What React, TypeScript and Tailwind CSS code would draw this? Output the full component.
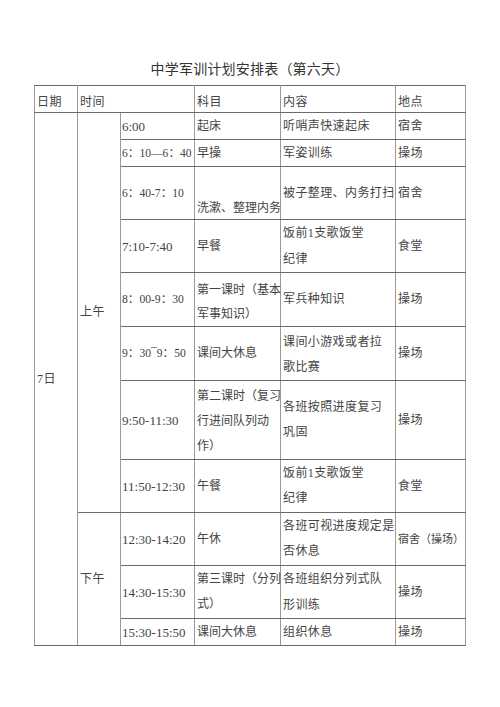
import type { ReactNode } from "react";

type CellProps = {
  children?: ReactNode;
  rowSpan?: number;
  colSpan?: number;
  className?: string;
};

function Td({ children, rowSpan, colSpan, className = "" }: CellProps) {
  return (
    <td
      rowSpan={rowSpan}
      colSpan={colSpan}
      className={`border-y border-y-[#6b6b6b] border-x border-x-[#9a9a9a] p-0 pl-[2px] align-middle ${className}`}
    >
      {children}
    </td>
  );
}

function Time({ children, ascii }: { children: ReactNode; ascii?: boolean }) {
  return (
    <Td className={`whitespace-nowrap tracking-[0px] ${ascii ? "text-[13px]" : "text-[11.6px]"} !pl-[1px]`}>
      {children}
    </Td>
  );
}

// 科目 column: a touch tighter so 7 characters fit the 86px column
function Subj({ children, className = "" }: { children: ReactNode; className?: string }) {
  return <Td className={`whitespace-nowrap tracking-[0px] ${className}`}>{children}</Td>;
}

export default function App() {
  return (
    <div className="min-h-[707px] w-[500px] bg-white pt-[60px] font-['Liberation_Serif','Noto_Sans_CJK_SC',serif] text-[#444]">
      <h1 className="h-[20px] text-center text-[14px] leading-[20px] tracking-[0.2px] text-[#333]">
        中学军训计划安排表（第六天）
      </h1>

      <table className="mx-auto mt-[5px] w-[431px] table-fixed border-collapse text-[12px] leading-[25px] tracking-[0.4px]">
        <colgroup>
          <col className="w-[43px]" />
          <col className="w-[43px]" />
          <col className="w-[74px]" />
          <col className="w-[86px]" />
          <col className="w-[115px]" />
          <col className="w-[70px]" />
        </colgroup>
        <tbody>
          <tr className="h-[27px]">
            <Td className="!align-bottom leading-[20px]">日期</Td>
            <Td colSpan={2} className="!align-bottom leading-[20px]">时间</Td>
            <Td className="!align-bottom leading-[20px]">科目</Td>
            <Td className="!align-bottom leading-[20px]">内容</Td>
            <Td className="!align-bottom leading-[20px]">地点</Td>
          </tr>

          <tr className="h-[27px]">
            <Td rowSpan={11}>7日</Td>
            <Td rowSpan={8}>上午</Td>
            <Time ascii>6:00</Time>
            <Subj>起床</Subj>
            <Td className="whitespace-nowrap">听哨声快速起床</Td>
            <Td>宿舍</Td>
          </tr>

          <tr className="h-[27px]">
            <Time>6：10—6：40</Time>
            <Subj>早操</Subj>
            <Td>军姿训练</Td>
            <Td>操场</Td>
          </tr>

          <tr className="h-[53px]">
            <Time>6：40-7：10</Time>
            <Subj className="!align-bottom leading-[22px]">洗漱、整理内务</Subj>
            <Td className="whitespace-nowrap">被子整理、内务打扫</Td>
            <Td>宿舍</Td>
          </tr>

          <tr className="h-[53px]">
            <Time ascii>7:10-7:40</Time>
            <Subj>早餐</Subj>
            <Td className="whitespace-nowrap leading-[26px]">
              饭前1支歌饭堂
              <br />
              纪律
            </Td>
            <Td>食堂</Td>
          </tr>

          <tr className="h-[54px]">
            <Time>8：00-9：30</Time>
            <Subj className="pt-[4px] leading-[24px]">
              第一课时（基本
              <br />
              军事知识）
            </Subj>
            <Td>军兵种知识</Td>
            <Td>操场</Td>
          </tr>

          <tr className="h-[52px]">
            <Time>9：30¯9：50</Time>
            <Subj>课间大休息</Subj>
            <Td className="whitespace-nowrap pt-[3px]">
              课间小游戏或者拉
              <br />
              歌比赛
            </Td>
            <Td>操场</Td>
          </tr>

          <tr className="h-[79px]">
            <Time ascii>9:50-11:30</Time>
            <Subj className="pt-[2px]">
              第二课时（复习
              <br />
              行进间队列动
              <br />
              作）
            </Subj>
            <Td className="whitespace-nowrap">
              各班按照进度复习
              <br />
              巩固
            </Td>
            <Td>操场</Td>
          </tr>

          <tr className="h-[53px]">
            <Time ascii>11:50-12:30</Time>
            <Subj>午餐</Subj>
            <Td className="whitespace-nowrap">
              饭前1支歌饭堂
              <br />
              纪律
            </Td>
            <Td>食堂</Td>
          </tr>

          <tr className="h-[53px]">
            <Td rowSpan={3}>下午</Td>
            <Time ascii>12:30-14:20</Time>
            <Subj>午休</Subj>
            <Td className="whitespace-nowrap">
              各班可视进度规定是
              <br />
              否休息
            </Td>
            <Td className="whitespace-nowrap text-[11px] tracking-[0px]">宿舍（操场）</Td>
          </tr>

          <tr className="h-[53px]">
            <Time ascii>14:30-15:30</Time>
            <Subj>
              第三课时（分列
              <br />
              式）
            </Subj>
            <Td className="whitespace-nowrap leading-[26px]">
              各班组织分列式队
              <br />
              形训练
            </Td>
            <Td>操场</Td>
          </tr>

          <tr className="h-[27px]">
            <Time ascii>15:30-15:50</Time>
            <Subj>课间大休息</Subj>
            <Td>组织休息</Td>
            <Td>操场</Td>
          </tr>
        </tbody>
      </table>
    </div>
  );
}
